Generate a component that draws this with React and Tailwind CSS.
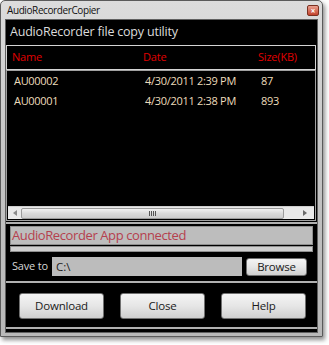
const rows = [
  { name: "AU00002", date: "4/30/2011 2:39 PM", size: "87" },
  { name: "AU00001", date: "4/30/2011 2:38 PM", size: "893" },
];

function WinButton({ children, className }) {
  return (
    <button
      className={
        "flex items-center justify-center rounded-[3px] border border-[#707070] bg-gradient-to-b from-[#f4f4f4] via-[#e6e6e6] to-[#cfcfcf] text-[11.5px] tracking-[-0.2px] text-[#1a1a1a] " +
        className
      }
    >
      {children}
    </button>
  );
}

export default function App() {
  return (
    <div
      className="w-[329px] h-[345px] bg-white overflow-hidden"
      style={{ fontFamily: '"Open Sans", "Noto Sans", sans-serif' }}
    >
      <div className="w-[323px] h-[337px] flex flex-col rounded-t-[5px] border border-[#5a5a5a] bg-gradient-to-b from-[#dcdcdc] via-[#c4c4c4] to-[#b8b8b8] shadow-[2px_3px_4px_rgba(0,0,0,0.45)]">
        {/* title bar */}
        <div className="h-[18px] flex items-center justify-between pl-[6px] pr-[3px]">
          <span className="text-[10px] tracking-[-0.4px] text-[#111] leading-none">AudioRecorderCopier</span>
          <div className="w-[12px] h-[11px] mt-[1px] rounded-[2px] border border-[#7a3020] bg-gradient-to-b from-[#e9a090] to-[#c2402a] flex items-center justify-center">
            <span className="text-[8px] leading-none text-white font-bold">×</span>
          </div>
        </div>

        {/* client */}
        <div className="flex-1 mx-[4px] mb-[3px] border border-[#606060] bg-black flex flex-col">
          <div className="h-[25px] flex items-center pl-[4px] text-[12.5px] tracking-[-0.2px] text-[#dcdcdc]">
            AudioRecorder file copy utility
          </div>

          <div className="h-[25px] mr-[1px] border border-[#d4d4d4] flex items-center text-[11px] tracking-[-0.2px] text-[#e00000]">
            <span className="w-[136px] pl-[5px]">Name</span>
            <span className="w-[115px]">Date</span>
            <span>Size(KB)</span>
          </div>

          <div className="h-[151px] mr-[1px] border border-[#a0a0a0] flex flex-col">
            <div className="flex-1">
              {rows.map((r) => (
                <div key={r.name} className="h-[20px] flex items-center text-[11px] tracking-[-0.3px] text-[#ecdcbc]">
                  <span className="w-[138px] pl-[7px]">{r.name}</span>
                  <span className="w-[116px]">{r.date}</span>
                  <span>{r.size}</span>
                </div>
              ))}
            </div>
            {/* horizontal scrollbar */}
            <div className="h-[13px] mx-[1px] mb-[1px] bg-[#e9e9e9] border-t border-[#cfcfcf] flex items-center">
              <div className="w-[13px] h-full flex items-center justify-center">
                <svg width="4" height="6" viewBox="0 0 4 6"><path d="M4 0 L0 3 L4 6 Z" fill="#8a8a8a" /></svg>
              </div>
              <div className="flex-1 h-[11px] rounded-[2px] border border-[#9c9c9c] bg-gradient-to-b from-[#f2f2f2] via-[#dadada] to-[#cdcdcd] flex items-center justify-center gap-[1px]">
                <span className="w-[1px] h-[5px] bg-[#555]" />
                <span className="w-[1px] h-[5px] bg-[#555]" />
                <span className="w-[1px] h-[5px] bg-[#555]" />
                <span className="w-[1px] h-[5px] bg-[#555]" />
              </div>
              <div className="w-[30px] h-full flex items-center justify-end pr-[7px]">
                <svg width="4" height="6" viewBox="0 0 4 6"><path d="M0 0 L4 3 L0 6 Z" fill="#6a6a6a" /></svg>
              </div>
            </div>
          </div>

          {/* status group */}
          <div className="mt-[1px] border-t-[2px] border-b-[2px] border-[#b0b0b0] flex flex-col px-[4px] pt-[2px]">
            <div className="h-[19px] bg-[#bdbdbd] border border-[#8e8e8e] flex items-center pl-[1px] text-[13px] tracking-[-0.4px] text-[#b5404e] leading-none">
              AudioRecorder App connected
            </div>
            <div className="h-[6px] mt-[1px] bg-[#cfcfcf] border border-[#8e8e8e]" />
            <div className="h-[29px] flex items-center">
              <span className="w-[42px] pl-[2px] text-[11px] tracking-[-0.2px] text-[#d6d6d6] whitespace-nowrap">Save to</span>
              <div className="w-[190px] h-[19px] bg-[#bcbcbc] flex items-center pl-[4px] text-[11.5px] text-[#222]">C:\</div>
              <WinButton className="ml-[4px] w-[61px] h-[18px]">Browse</WinButton>
            </div>
          </div>

          {/* button group */}
          <div className="flex-1 flex items-start gap-[16px] pl-[13px] pt-[10px] border-b-[2px] border-[#b0b0b0] mb-[3px]">
            <WinButton className="w-[85px] h-[26px]">Download</WinButton>
            <WinButton className="w-[85px] h-[26px]">Close</WinButton>
            <WinButton className="w-[85px] h-[26px]">Help</WinButton>
          </div>
        </div>
      </div>
    </div>
  );
}
